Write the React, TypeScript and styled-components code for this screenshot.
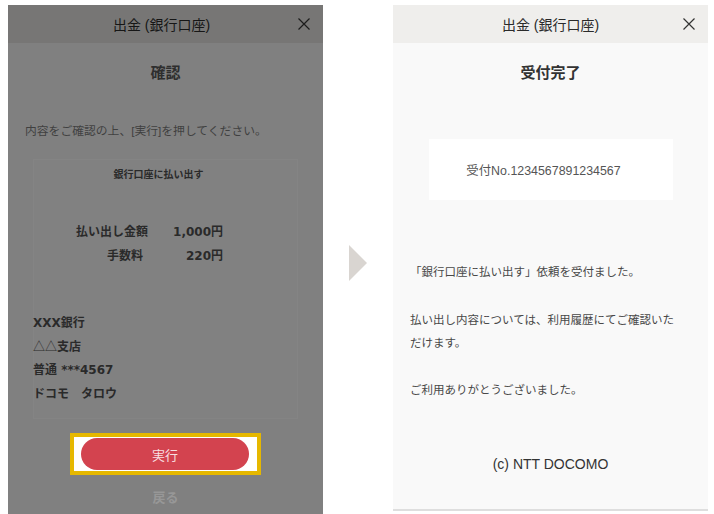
import { createGlobalStyle } from 'styled-components';
import styled from 'styled-components';

const GlobalStyle = createGlobalStyle`
  html, body {
    margin: 0;
    padding: 0;
    background: #ffffff;
  }
  body {
    font-family: "Liberation Sans", "Noto Sans CJK JP", sans-serif;
  }
`;

const Page = styled.div`
  display: flex;
  align-items: flex-start;
  padding: 5px 0 0 8px;
  height: 509px;
  overflow: hidden;
`;

const Screen = styled.div<{ $dim?: boolean }>`
  display: flex;
  flex-direction: column;
  width: 315px;
  height: ${(p) => (p.$dim ? '509px' : '504px')};
  background: ${(p) => (p.$dim ? '#808080' : '#f9f9f9')};
  border-bottom: ${(p) => (p.$dim ? 'none' : '2px solid #dedede')};
  flex-shrink: 0;
`;

const Header = styled.div<{ $dim?: boolean }>`
  position: relative;
  display: flex;
  align-items: center;
  justify-content: center;
  height: 38px;
  padding-right: ${(p) => (p.$dim ? '8px' : '0')};
  background: ${(p) => (p.$dim ? '#777675' : '#efeeec')};
  color: ${(p) => (p.$dim ? '#161616' : '#2a2a2a')};
  font-size: 14px;
`;

const Close = styled.svg`
  position: absolute;
  right: 13px;
  top: 13px;
`;

const Title = styled.div<{ $dim?: boolean }>`
  margin-top: 20px;
  text-align: center;
  font-size: 15px;
  line-height: 20px;
  font-weight: 700;
  color: ${(p) => (p.$dim ? '#2e2e2e' : '#333333')};
`;

const Note = styled.div<{ $top: number; $dim?: boolean }>`
  margin-top: ${(p) => p.$top}px;
  padding: 0 17px;
  font-size: ${(p) => (p.$dim ? '11.8px' : '11.5px')};
  line-height: 23px;
  color: ${(p) => (p.$dim ? '#404040' : '#484848')};
`;

const Card = styled.div`
  margin: 16px 25px 0;
  padding: 7px 0 13px;
  background: #818181;
  box-shadow: inset 0 0 0 1px rgba(255, 255, 255, 0.03);
  color: #2a2a2a;
  font-family: "DejaVu Sans", "Noto Sans CJK JP", sans-serif;
  font-weight: 700;
`;

const CardHeading = styled.div`
  padding-right: 14px;
  text-align: center;
  font-family: "Noto Sans CJK JP", sans-serif;
  font-size: 10px;
  line-height: 16px;
`;

const Amounts = styled.div`
  display: grid;
  grid-template-columns: 115px 75px;
  margin-top: 38px;
  font-size: 12px;
  line-height: 24px;
`;

const AmountLabel = styled.div<{ $shift?: number }>`
  justify-self: end;
  padding-right: ${(p) => p.$shift ?? 0}px;
`;

const AmountValue = styled.div`
  justify-self: end;
`;

const Account = styled.div`
  margin-top: 44px;
  font-size: 12px;
  line-height: 23.5px;
`;

const AccountLine = styled.div`
  height: 23.5px;
  white-space: nowrap;
`;

const Glyph = styled.span`
  font-family: "Noto Sans CJK JP", sans-serif;
  font-weight: 400;
  line-height: 0;
`;

const Spotlight = styled.div`
  align-self: center;
  margin-top: 14px;
  padding: 1px 8px 1px 7px;
  border: 4px solid #e6b800;
  background: #ffffff;
`;

const RunButton = styled.button`
  display: block;
  width: 168px;
  height: 32px;
  border: none;
  border-radius: 16px;
  background: #d3434f;
  color: #f8dfe1;
  font-family: inherit;
  font-size: 13px;
`;

const Back = styled.div`
  margin-top: 14px;
  text-align: center;
  font-size: 13px;
  line-height: 18px;
  color: #979797;
  font-weight: 700;
`;

const Gutter = styled.div`
  display: flex;
  justify-content: center;
  width: 70px;
  flex-shrink: 0;
  padding-top: 240px;
`;

const Receipt = styled.div`
  display: flex;
  align-items: center;
  justify-content: center;
  height: 61px;
  margin: 56px 35px 0 36px;
  padding-right: 15px;
  background: #ffffff;
  color: #555555;
  font-size: 12.4px;
`;

const Copyright = styled.div`
  margin-top: 52px;
  text-align: center;
  font-size: 14px;
  line-height: 20px;
  color: #333333;
`;

function CloseIcon({ dim }: { dim?: boolean }) {
  return (
    <Close width="12" height="12" viewBox="0 0 12 12">
      <path d="M0.5 0.5L11.5 11.5M11.5 0.5L0.5 11.5" stroke={dim ? '#1c1c1c' : '#333'} strokeWidth="1.2" fill="none" />
    </Close>
  );
}

function ConfirmScreen() {
  return (
    <Screen $dim>
      <Header $dim>
        出金 (銀行口座)
        <CloseIcon dim />
      </Header>
      <Title $dim>確認</Title>
      <Note $dim $top={37}>内容をご確認の上、[実行]を押してください。</Note>
      <Card>
        <CardHeading>銀行口座に払い出す</CardHeading>
        <Amounts>
          <AmountLabel>払い出し金額</AmountLabel>
          <AmountValue>1,000円</AmountValue>
          <AmountLabel $shift={5}>手数料</AmountLabel>
          <AmountValue>220円</AmountValue>
        </Amounts>
        <Account>
          <AccountLine>XXX銀行</AccountLine>
          <AccountLine>
            <Glyph>△△</Glyph>支店
          </AccountLine>
          <AccountLine>普通 ***4567</AccountLine>
          <AccountLine>ドコモ　タロウ</AccountLine>
        </Account>
      </Card>
      <Spotlight>
        <RunButton>実行</RunButton>
      </Spotlight>
      <Back>戻る</Back>
    </Screen>
  );
}

function DoneScreen() {
  return (
    <Screen>
      <Header>
        出金 (銀行口座)
        <CloseIcon />
      </Header>
      <Title>受付完了</Title>
      <Receipt>受付No.1234567891234567</Receipt>
      <Note $top={61}>「銀行口座に払い出す」依頼を受付ました。</Note>
      <Note $top={25}>
        払い出し内容については、利用履歴にてご確認いた
        <br />
        だけます。
      </Note>
      <Note $top={24}>ご利用ありがとうございました。</Note>
      <Copyright>(c) NTT DOCOMO</Copyright>
    </Screen>
  );
}

export default function App() {
  return (
    <>
      <GlobalStyle />
      <Page>
        <ConfirmScreen />
        <Gutter>
          <svg width="18" height="36" viewBox="0 0 18 36">
            <polygon points="0,0 18,18 0,36" fill="#d9d5d1" />
          </svg>
        </Gutter>
        <DoneScreen />
      </Page>
    </>
  );
}
